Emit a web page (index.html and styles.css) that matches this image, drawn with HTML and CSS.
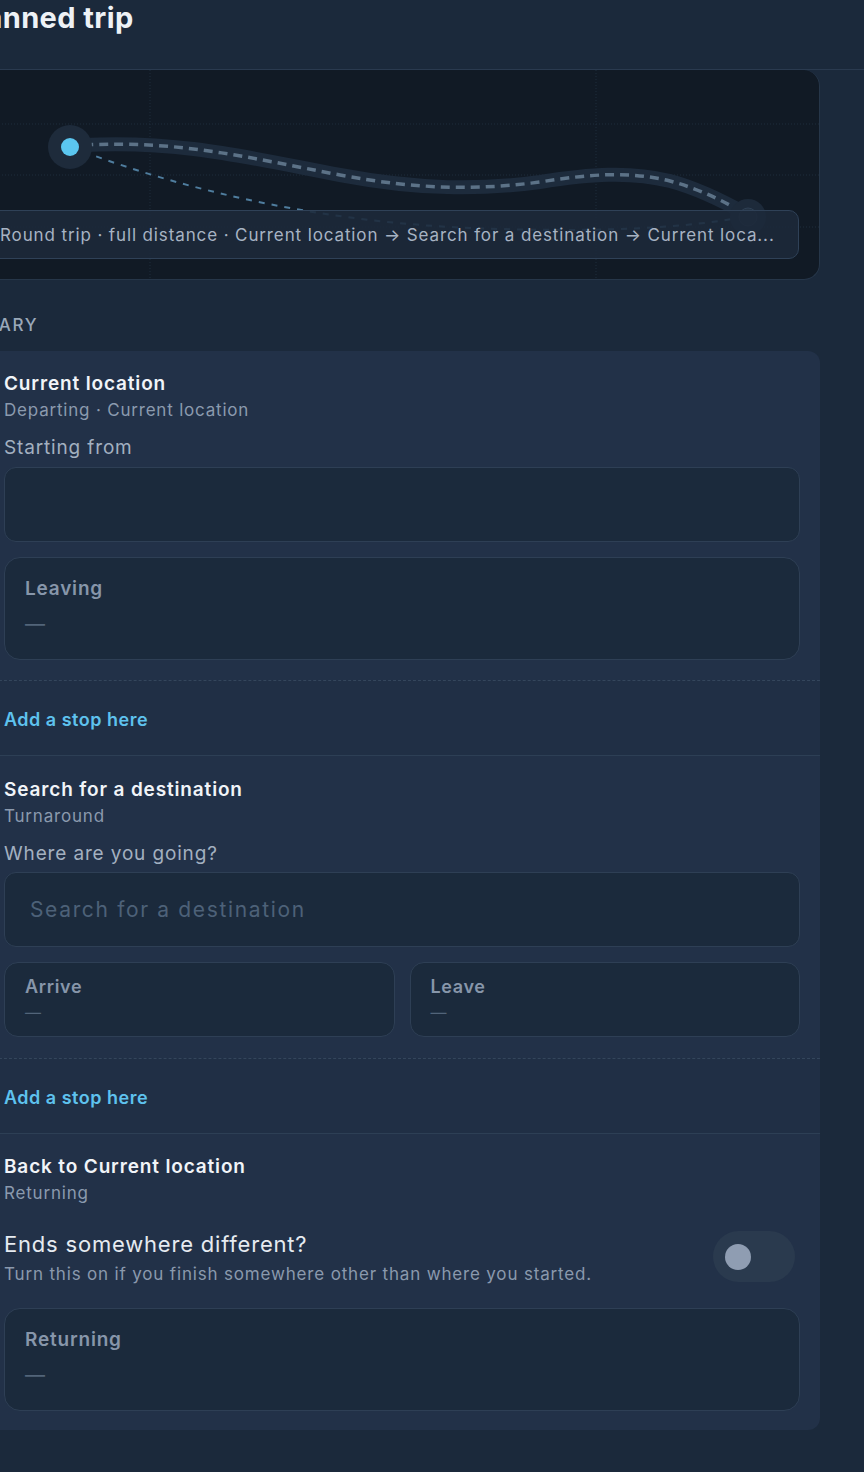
FILE: index.html
```html
<!DOCTYPE html>
<html lang="en">
<head>
<meta charset="utf-8">
<title>Planned trip</title>
<link rel="stylesheet" href="styles.css">
</head>
<body>
<div class="page">
  <header class="topbar">
    <h1 class="title">Planned trip</h1>
  </header>

  <section class="map">
    <svg class="map-svg" viewBox="-16 70 836 210" width="836" height="210" aria-hidden="true">
      <g class="grid">
        <line x1="150" y1="70" x2="150" y2="280"/>
        <line x1="596" y1="70" x2="596" y2="280"/>
        <line x1="-16" y1="124" x2="820" y2="124"/>
        <line x1="-16" y1="175" x2="820" y2="175"/>
        <line x1="-16" y1="227" x2="820" y2="227"/>
      </g>
      <path class="ret" d="M 84 152 C 200 195, 330 222, 470 228 C 600 233, 690 228, 748 216"/>
      <path class="band" d="M 84 145 C 180 140, 250 158, 340 175 C 420 190, 480 190, 540 182 C 590 174, 630 171, 670 181 C 700 189, 725 202, 748 215"/>
      <path class="dash" d="M 84 145 C 180 140, 250 158, 340 175 C 420 190, 480 190, 540 182 C 590 174, 630 171, 670 181 C 700 189, 725 202, 748 215"/>
      <circle class="end-halo" cx="748" cy="217" r="18"/>
      <circle class="end-dot" cx="748" cy="217" r="9"/>
      <circle class="start-halo" cx="70" cy="147" r="22"/>
      <circle class="start-dot" cx="70" cy="147" r="9"/>
    </svg>
    <div class="summary-pill">Round trip · full distance · Current location → Search for a destination → Current loca...</div>
  </section>

  <h2 class="section-label">ITINERARY</h2>

  <div class="itinerary">
    <div class="stop">
      <div class="stop-title">Current location</div>
      <div class="stop-sub">Departing · Current location</div>
      <div class="field-label">Starting from</div>
      <div class="input"></div>
      <div class="time-box tall">
        <div class="time-label">Leaving</div>
        <div class="time-value">—</div>
      </div>
    </div>

    <div class="add-stop">Add a stop here</div>

    <div class="stop middle">
      <div class="stop-title">Search for a destination</div>
      <div class="stop-sub">Turnaround</div>
      <div class="field-label">Where are you going?</div>
      <div class="input"><span class="placeholder">Search for a destination</span></div>
      <div class="time-row">
        <div class="time-box short">
          <div class="time-label">Arrive</div>
          <div class="time-value">—</div>
        </div>
        <div class="time-box short">
          <div class="time-label">Leave</div>
          <div class="time-value">—</div>
        </div>
      </div>
    </div>

    <div class="add-stop">Add a stop here</div>

    <div class="stop last">
      <div class="stop-title">Back to Current location</div>
      <div class="stop-sub">Returning</div>
      <div class="toggle-row">
        <div class="toggle-text">
          <div class="toggle-q">Ends somewhere different?</div>
          <div class="toggle-desc">Turn this on if you finish somewhere other than where you started.</div>
        </div>
        <div class="toggle"><span class="knob"></span></div>
      </div>
      <div class="time-box tall">
        <div class="time-label">Returning</div>
        <div class="time-value">—</div>
      </div>
    </div>
  </div>
</div>
</body>
</html>
```
FILE: styles.css
```css
html, body {
  margin: 0;
  padding: 0;
  background: #1b293b;
  overflow: hidden;
}
body {
  width: 864px;
  height: 1472px;
  font-family: "Inter", "Noto Sans", sans-serif;
  color: #eef2f6;
}
.page {
  margin-left: -16px;
  width: 836px;
  display: flex;
  flex-direction: column;
}
.topbar {
  width: 880px;
  height: 69px;
  border-bottom: 1px solid #2a3a4f;
  display: flex;
  align-items: flex-start;
}
.title {
  margin: 0 0 0 -26px;
  font-size: 29px;
  line-height: 36px;
  font-weight: 700;
  letter-spacing: 0.4px;
  color: #eef2f6;
}
.map {
  position: relative;
  height: 210px;
  background: #111a25;
  border: 1px solid #263649;
  border-left: none;
  border-top: none;
  border-radius: 0 16px 16px 0;
  box-sizing: border-box;
  overflow: hidden;
}
.map-svg {
  display: block;
  position: absolute;
  left: 0;
  top: 0;
}
.grid line {
  stroke: #1e2c3c;
  stroke-width: 1;
  stroke-dasharray: 1 2;
}
.band {
  fill: none;
  stroke: #1d2b3c;
  stroke-width: 14;
  stroke-linecap: round;
}
.dash {
  fill: none;
  stroke: #5c7287;
  stroke-width: 3.5;
  stroke-dasharray: 9 6;
}
.ret {
  fill: none;
  stroke: #4f7d9e;
  stroke-width: 2;
  stroke-dasharray: 6 7;
}
.start-halo { fill: #1e2b3b; }
.start-dot { fill: #5bc6ef; }
.end-halo { fill: #1d2a3a; }
.end-dot { fill: #243344; stroke: #2f4054; stroke-width: 1; }
.summary-pill {
  position: absolute;
  left: 6px;
  right: 20px;
  top: 140px;
  height: 49px;
  box-sizing: border-box;
  border: 1px solid #2f4157;
  border-radius: 10px;
  background: rgba(28, 41, 58, 0.88);
  display: flex;
  align-items: center;
  padding-left: 9px;
  font-size: 17px;
  letter-spacing: 0.88px;
  color: #a7b3c3;
  white-space: nowrap;
  overflow: hidden;
}
.section-label {
  margin: 34px 0 15px -50px;
  font-size: 17px;
  line-height: 22px;
  font-weight: 500;
  letter-spacing: 1.7px;
  color: #9aa8b9;
}
.itinerary {
  background: #223148;
  border-radius: 0 12px 12px 0;
  overflow: hidden;
}
.stop {
  padding: 22px 20px 20px 20px;
  display: flex;
  flex-direction: column;
}
.stop.middle { padding-top: 23px; padding-bottom: 21px; }
.stop-title {
  font-size: 19px;
  line-height: 22px;
  font-weight: 600;
  letter-spacing: 0.85px;
  color: #f1f4f8;
}
.stop-sub {
  margin-top: 5px;
  font-size: 17px;
  line-height: 20px;
  letter-spacing: 0.8px;
  color: #8b9aae;
}
.field-label {
  margin-top: 17px;
  font-size: 19px;
  line-height: 22px;
  letter-spacing: 0.85px;
  color: #a3b0c0;
}
.input {
  margin-top: 8px;
  height: 75px;
  box-sizing: border-box;
  border: 1px solid #2e3f55;
  border-radius: 12px;
  background: #1b2a3c;
  display: flex;
  align-items: center;
  padding-left: 25px;
}
.stop.middle .input { margin-top: 7px; }
.placeholder {
  font-size: 21px;
  letter-spacing: 1.65px;
  color: #4d6178;
}
.time-box {
  box-sizing: border-box;
  border: 1px solid #2e3f55;
  background: #1b2a3c;
  padding-left: 20px;
}
.time-box.tall {
  margin-top: 15px;
  height: 103px;
  border-radius: 16px;
  padding-top: 20px;
}
.time-box.short {
  flex: 1;
  height: 75px;
  border-radius: 14px;
  padding-top: 13px;
}
.time-label {
  font-size: 18px;
  line-height: 22px;
  font-weight: 600;
  letter-spacing: 0.65px;
  color: #8796aa;
}
.tall .time-label { font-size: 19px; letter-spacing: 0.8px; }
.time-value {
  margin-top: 14px;
  font-size: 20px;
  line-height: 20px;
  color: #526479;
}
.short .time-value { margin-top: 4px; font-size: 16px; }
.time-row {
  margin-top: 15px;
  display: flex;
  gap: 15px;
}
.add-stop {
  height: 76px;
  box-sizing: border-box;
  border-top: 1px dashed #34465c;
  border-bottom: 1px solid #2d3f55;
  background: #202f45;
  padding-left: 20px;
  display: flex;
  align-items: center;
  padding-top: 2px;
  font-size: 18px;
  font-weight: 600;
  letter-spacing: 0.5px;
  color: #5ec2ee;
}
.toggle-row {
  margin-top: 28px;
  display: flex;
  align-items: flex-start;
  justify-content: space-between;
}
.toggle-q {
  font-size: 22px;
  line-height: 26px;
  letter-spacing: 0.8px;
  color: #e6ebf1;
}
.toggle-desc {
  margin-top: 7px;
  font-size: 17px;
  line-height: 20px;
  letter-spacing: 0.83px;
  color: #8a99ad;
}
.toggle {
  flex: none;
  width: 82px;
  height: 51px;
  margin-right: 5px;
  border-radius: 26px;
  background: #2a3a4e;
  display: flex;
  align-items: center;
  padding-left: 12px;
  box-sizing: border-box;
}
.knob {
  width: 26px;
  height: 26px;
  border-radius: 50%;
  background: #8f9db2;
}
.stop.last { padding-bottom: 19px; }
.stop.last .time-box.tall { margin-top: 24px; }
```
